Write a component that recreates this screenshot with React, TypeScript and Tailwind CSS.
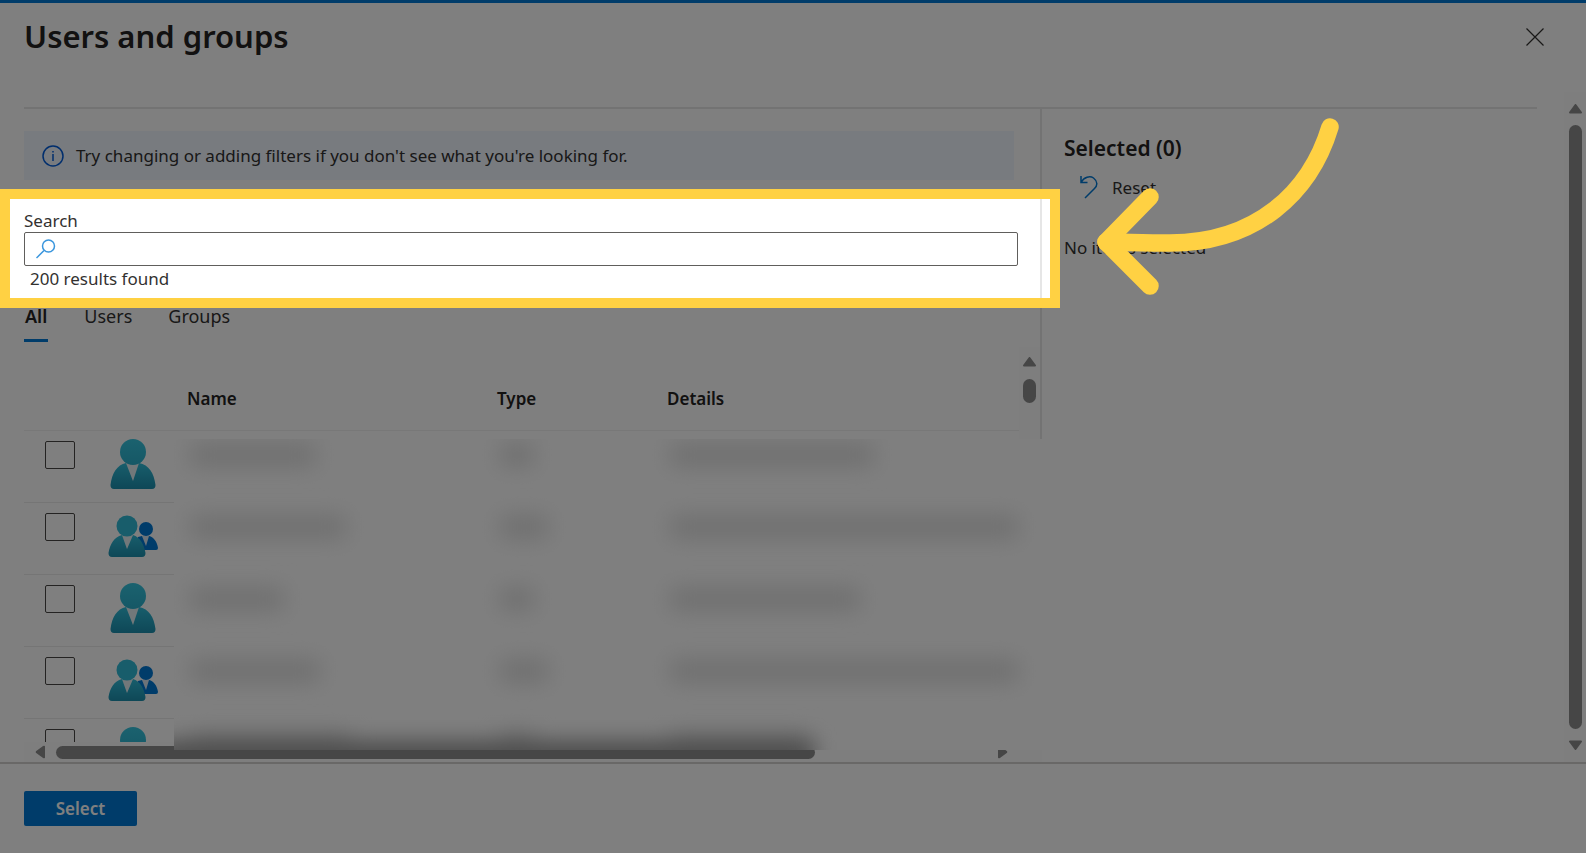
import { useState } from "react";

const rows = [
  { id: 1, kind: "user", name: 126, type: 34, details: 204 },
  { id: 2, kind: "group", name: 156, type: 48, details: 348 },
  { id: 3, kind: "user", name: 94, type: 34, details: 190 },
  { id: 4, kind: "group", name: 130, type: 48, details: 348 },
  { id: 5, kind: "user", name: 160, type: 34, details: 140 },
];

const tabs = ["All", "Users", "Groups"];

function UserIcon() {
  return (
    <svg width="46" height="50" viewBox="0 0 46 50" aria-hidden="true">
      <defs>
        <linearGradient id="userHead" x1="0" y1="0" x2="0" y2="1">
          <stop offset="0" stopColor="#36c4de" />
          <stop offset="1" stopColor="#2cb0cc" />
        </linearGradient>
        <linearGradient id="userBody" x1="0" y1="0" x2="0" y2="1">
          <stop offset="0" stopColor="#30bcd8" />
          <stop offset="1" stopColor="#1d8fae" />
        </linearGradient>
      </defs>
      <path d="M16 24h14l-7 18z" fill="#e4f0f4" />
      <path
        d="M16 24 23 42 29 24C39 26 44 34 45.500 46Q45.500 50 42 50H4Q.5 50 .5 46C2 34 7 26 16 24z"
        fill="url(#userBody)"
      />
      <circle cx="23" cy="13" r="13" fill="url(#userHead)" />
    </svg>
  );
}

function GroupIcon() {
  return (
    <svg width="50" height="42" viewBox="0 0 50 42" aria-hidden="true">
      <defs>
        <linearGradient id="groupBody" x1="0" y1="0" x2="0" y2="1">
          <stop offset="0" stopColor="#30bcd8" />
          <stop offset="1" stopColor="#1d8fae" />
        </linearGradient>
      </defs>
      <path d="M34 21h8l-4 11z" fill="#d8e6f2" />
      <path
        d="M34 21 38 31 41 21C46 22 49 27 50 33Q50 35 48 35H30V22z"
        fill="#0078d4"
      />
      <circle cx="38" cy="14" r="7" fill="#0078d4" />
      <path d="M14 20h11l-6 14z" fill="#e4f0f4" />
      <path
        d="M14 20 19 34 25 20C32 22 36 29 37.500 38Q37.500 42 34 42H4Q.5 42 .5 38C2 29 6 22 14 20z"
        fill="url(#groupBody)"
      />
      <circle cx="19" cy="11" r="10.500" fill="#30bad6" />
    </svg>
  );
}

function Triangle({ className }: { className: string }) {
  return (
    <svg width="13" height="10" viewBox="0 0 13 10" className={className} aria-hidden="true">
      <path d="M6.500 1 12 8.500H1z" fill="#8c8c8c" stroke="#8c8c8c" strokeWidth="2" strokeLinejoin="round" />
    </svg>
  );
}

function Redaction() {
  return (
    <div className="absolute top-[92px] -right-1 bottom-3 left-[150px] z-10 overflow-hidden bg-white">
      {rows.map((row) => (
        <div key={row.id} className="flex h-[72px] pt-1 pl-4 blur-[11px]">
          <div className="w-[310px] shrink-0">
            <div className="h-6 bg-[#e0e0e0]" style={{ width: row.name }} />
          </div>
          <div className="w-[170px] shrink-0">
            <div className="h-6 bg-[#e0e0e0]" style={{ width: row.type }} />
          </div>
          <div className="h-6 shrink-0 bg-[#e0e0e0]" style={{ width: row.details }} />
        </div>
      ))}
      <div className="absolute -bottom-4 -left-4 h-6 w-[656px] bg-[#8c8c8c] blur-[11px]" />
    </div>
  );
}

// Yellow frame that dims everything around it, with the arrow pointing at it
function Spotlight() {
  return (
    <div className="pointer-events-none absolute -top-[21px] -right-5 -bottom-[17px] -left-6 z-20 border-[10px] border-[#ffd143] shadow-[0_0_0_3000px_rgba(0,0,0,0.5)]">
      <svg
        width="260"
        height="185"
        viewBox="0 0 260 185"
        fill="none"
        stroke="#ffd143"
        strokeWidth="17.500"
        strokeLinecap="round"
        strokeLinejoin="round"
        className="absolute -top-[84px] left-full ml-10"
        aria-hidden="true"
      >
        <path d="M240 12C220 78 166 128 80 128C54 128 32 127 16 127" />
        <path d="M60 82 16 127 60 171" />
      </svg>
    </div>
  );
}

export default function App() {
  const [tab, setTab] = useState("All");
  const [query, setQuery] = useState("");

  return (
    <div className="flex min-h-screen flex-col overflow-hidden bg-white font-['Noto_Sans',sans-serif] text-[17px] leading-6 text-[#323130]">
      <div className="h-[3px] bg-[#0078d4]" />
      <header className="flex h-[89px] items-start justify-between pt-[11px] pr-9 pl-6">
        <h1 className="text-[31px] leading-[44px] font-semibold text-[#242322]">Users and groups</h1>
        <button type="button" aria-label="Close" className="mt-2 p-[6px]">
          <svg width="18" height="18" viewBox="0 0 18 18" stroke="#323130" strokeWidth="1.200" aria-hidden="true">
            <path d="M.5.5l17 17M17.500.5l-17 17" />
          </svg>
        </button>
      </header>

      <main className="flex flex-1">
        <div className="flex flex-1 flex-col pt-[15px] pr-[27px] pl-6">
          <div className="flex flex-1 border-t-2 border-[#e6e6e6]">
            <section className="flex flex-1 flex-col border-r-2 border-[#e6e6e6] pt-[22px]">
              <div className="mr-[26px] flex h-[49px] items-center gap-3 bg-[#f0f6ff] pl-[18px]">
                <svg width="22" height="22" viewBox="0 0 22 22" fill="none" stroke="#015cda" strokeWidth="1.500" aria-hidden="true">
                  <circle cx="11" cy="11" r="10" />
                  <path d="M11 9v7M11 6v1.500" />
                </svg>
                <p>Try changing or adding filters if you don't see what you're looking for.</p>
              </div>

              <div className="relative mt-[30px]">
                <label htmlFor="search" className="block leading-[22px]">
                  Search
                </label>
                <div className="mr-[22px] flex h-[34px] items-center rounded-[2px] border border-[#605e5c] pl-[11px]">
                  <svg width="20" height="20" viewBox="0 0 20 20" fill="none" stroke="#3a96dd" strokeWidth="1.500" aria-hidden="true">
                    <circle cx="12.500" cy="7" r="6" />
                    <path d="M8 11.500.5 19" />
                  </svg>
                  <input
                    id="search"
                    type="text"
                    value={query}
                    onChange={(e) => setQuery(e.target.value)}
                    className="h-full flex-1 px-2 outline-none"
                  />
                </div>
                <p className="pt-px pl-[6px]">200 results found</p>
                <Spotlight />
              </div>

              <nav className="mt-[13px] flex gap-9 text-[18px]">
                {tabs.map((name) => (
                  <button
                    key={name}
                    type="button"
                    onClick={() => setTab(name)}
                    className={
                      tab === name
                        ? "border-b-[3px] border-[#0078d4] px-px pb-[11px] font-semibold text-[#242322]"
                        : "border-b-[3px] border-transparent pb-[11px]"
                    }
                  >
                    {name}
                  </button>
                ))}
              </nav>

              <div className="relative mt-[5px] flex flex-1 flex-col">
                <div className="flex h-[395px] overflow-hidden">
                  <div className="flex-1">
                    <table className="w-full table-fixed border-collapse text-left">
                      <thead>
                        <tr className="h-[83px] border-b border-[#f0f0f0] text-[#242322]">
                          <th className="w-[73px]" aria-label="Selection" />
                          <th className="w-[90px]" aria-label="Kind" />
                          <th className="w-[310px] pt-[22px] font-semibold">Name</th>
                          <th className="w-[170px] pt-[22px] font-semibold">Type</th>
                          <th className="pt-[22px] font-semibold">Details</th>
                        </tr>
                      </thead>
                      <tbody>
                        {rows.map((row) => (
                          <tr key={row.id} className="h-[72px] border-b border-[#ebebeb]">
                            <td className="pt-[10px] pl-[21px] align-top">
                              <input
                                type="checkbox"
                                aria-label={"Select row " + row.id}
                                className="block h-7 w-[30px] appearance-none rounded-[2px] border border-[#484644] checked:bg-[#0078d4]"
                              />
                            </td>
                            <td className={row.kind === "user" ? "pt-2 pl-[13px] align-top" : "pt-3 pl-[11px] align-top"}>
                              {row.kind === "user" ? <UserIcon /> : <GroupIcon />}
                            </td>
                            <td />
                            <td />
                            <td />
                          </tr>
                        ))}
                      </tbody>
                    </table>
                  </div>
                  <div className="flex w-[21px] flex-col items-center gap-3 bg-[#fcfcfc] pt-[10px]">
                    <Triangle className="" />
                    <div className="h-6 w-[13px] rounded-full bg-[#8c8c8c]" />
                  </div>
                </div>
                <Redaction />
                <div className="relative -mr-[2px] flex h-5 items-center bg-[#fcfcfc] pr-[33px] pl-[10px]">
                  <Triangle className="-rotate-90" />
                  <div className="ml-[9px] h-[13px] w-[759px] rounded-full bg-[#8c8c8c]" />
                  <Triangle className="ml-auto rotate-90" />
                </div>
              </div>
            </section>

            <aside className="w-[495px] shrink-0 pt-[25px] pl-[22px]">
              <h2 className="text-[21px] leading-7 font-semibold text-[#242322]">Selected (0)</h2>
              <button type="button" className="mt-[14px] flex items-center gap-[14px] pl-4">
                <svg width="18" height="24" viewBox="0 0 18 24" fill="none" stroke="#0078d4" strokeWidth="1.500" aria-hidden="true">
                  <path d="M1 0v6.500h6.500M1 6.500C4 1 10 -.5 13.500 2C18 5.500 17.500 9.500 14.500 12.500L5 22" />
                </svg>
                Reset
              </button>
              <p className="mt-9">No items selected</p>
            </aside>
          </div>
        </div>

        <div className="flex w-[22px] flex-col items-center gap-[11px] bg-[#fcfcfc] py-3">
          <Triangle className="" />
          <div className="w-[13px] flex-1 rounded-full bg-[#8c8c8c]" />
          <Triangle className="rotate-180" />
        </div>
      </main>

      <footer className="h-[91px] border-t-2 border-[#d2d0ce] pt-[27px] pl-6">
        <button type="button" className="h-[35px] w-[113px] rounded-[2px] bg-[#0078d4] font-semibold text-white">
          Select
        </button>
      </footer>
    </div>
  );
}
